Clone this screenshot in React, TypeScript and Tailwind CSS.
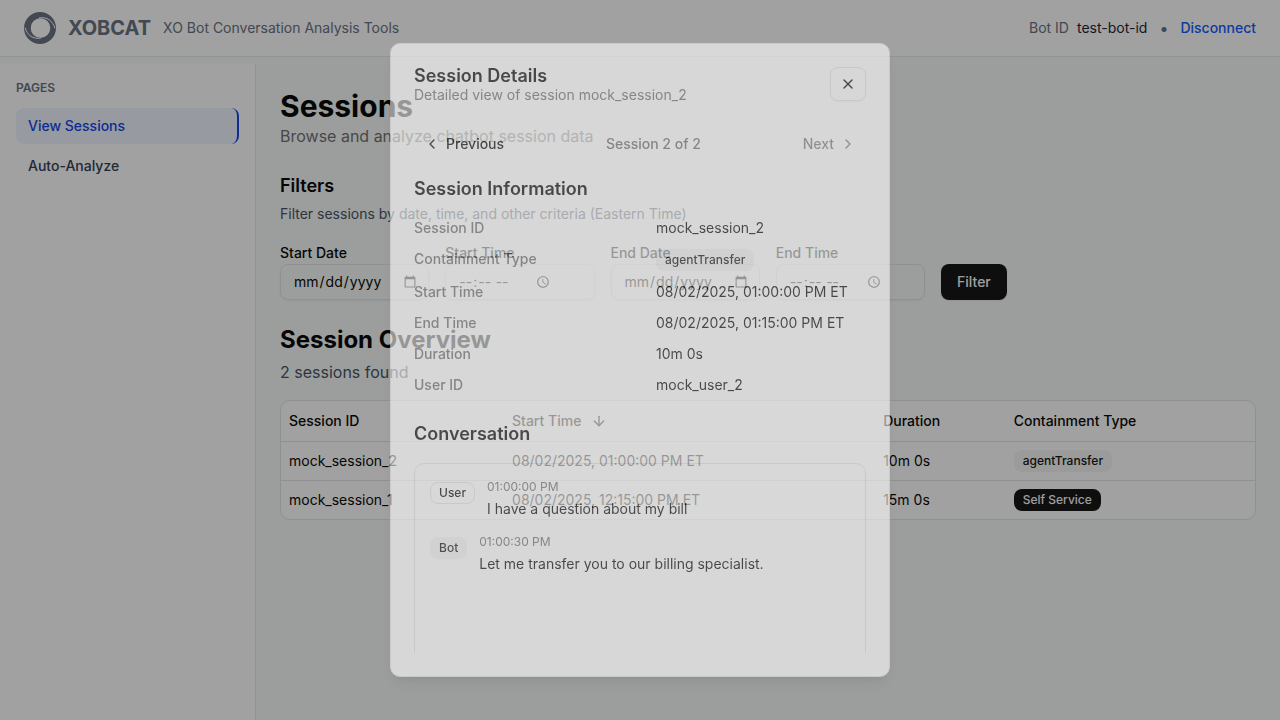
import type { ReactNode } from "react";
import { ArrowDown, ChevronLeft, ChevronRight, X } from "lucide-react";

function Logo() {
  return (
    <svg viewBox="0 0 32 32" className="size-8 text-gray-500" aria-hidden="true">
      <path
        fill="currentColor"
        fillRule="evenodd"
        d="M16 0a16 16 0 1 1 0 32a16 16 0 1 1 0-32zM16.500 6.200a9.800 9.800 0 1 0 0 19.600a9.800 9.800 0 1 0 0-19.600z"
      />
      <path
        fill="none"
        stroke="white"
        strokeLinecap="round"
        d="M15 6C23 4.200 29 9 30.800 16M17 26C9 27.800 3 23 1.200 16"
      />
    </svg>
  );
}

function Badge({ kind, children }: { kind: "solid" | "soft" | "outline"; children: ReactNode }) {
  const look = {
    solid: "border-transparent bg-neutral-900 text-neutral-50",
    soft: "border-transparent bg-neutral-100 text-neutral-900",
    outline: "border-neutral-200 text-neutral-950",
  }[kind];
  return (
    <span className={`inline-flex items-center rounded-lg border px-2 py-0.5 text-xs leading-4 font-medium ${look}`}>
      {children}
    </span>
  );
}

function Field({ id, label, type }: { id: string; label: string; type: "date" | "time" }) {
  return (
    <div className="flex grow flex-col gap-1">
      <label htmlFor={id} className="text-sm leading-[14px] font-medium">
        {label}
      </label>
      <input
        id={id}
        type={type}
        className="flex h-9 w-full rounded-lg border border-neutral-200 bg-transparent px-3 py-1 text-sm shadow-xs"
      />
    </div>
  );
}

const sessions = [
  { id: "mock_session_2", start: "08/02/2025, 01:00:00 PM ET", duration: "10m 0s", type: "agentTransfer", kind: "soft" as const },
  { id: "mock_session_1", start: "08/02/2025, 12:15:00 PM ET", duration: "15m 0s", type: "Self Service", kind: "solid" as const },
];

const details: [string, ReactNode][] = [
  ["Session ID", "mock_session_2"],
  ["Containment Type", <Badge kind="soft">agentTransfer</Badge>],
  ["Start Time", "08/02/2025, 01:00:00 PM ET"],
  ["End Time", "08/02/2025, 01:15:00 PM ET"],
  ["Duration", "10m 0s"],
  ["User ID", "mock_user_2"],
];

const messages = [
  { from: "User", kind: "outline" as const, time: "01:00:00 PM", text: "I have a question about my bill" },
  { from: "Bot", kind: "soft" as const, time: "01:00:30 PM", text: "Let me transfer you to our billing specialist." },
];

function Header() {
  return (
    <header className="flex h-[57px] items-center justify-between border-b border-gray-200 bg-white px-6">
      <div className="flex items-center gap-3">
        <Logo />
        <span className="text-xl font-bold text-gray-500">XOBCAT</span>
        <span className="text-sm text-gray-500">XO Bot Conversation Analysis Tools</span>
      </div>
      <div className="flex items-center text-sm">
        <span className="text-gray-500">Bot ID</span>
        <span className="ml-2 text-gray-800">test-bot-id</span>
        <span className="mx-3 text-base text-gray-500">•</span>
        <a href="#disconnect" className="font-medium text-blue-600">
          Disconnect
        </a>
      </div>
    </header>
  );
}

function Sidebar() {
  return (
    <aside className="w-64 shrink-0 border-r border-gray-200 bg-white p-4">
      <h2 className="mb-3 text-xs leading-4 font-semibold text-gray-500">PAGES</h2>
      <nav className="flex flex-col gap-1 text-sm font-medium">
        <a href="#sessions" className="rounded-lg border-r-2 border-blue-700 bg-blue-50 px-3 py-2 text-blue-700">
          View Sessions
        </a>
        <a href="#analyze" className="rounded-lg px-3 py-2 text-gray-700">
          Auto-Analyze
        </a>
      </nav>
    </aside>
  );
}

function SessionsPage() {
  return (
    <main className="min-w-0 grow p-6">
      <h1 className="text-3xl leading-9 font-bold">Sessions</h1>
      <p className="text-base leading-6 text-neutral-500">Browse and analyze chatbot session data</p>

      <section className="mt-6">
        <h2 className="text-lg leading-7 font-semibold">Filters</h2>
        <p className="mt-1 text-sm text-gray-600">Filter sessions by date, time, and other criteria (Eastern Time)</p>
        <form className="mt-[22px] flex items-end gap-4">
          <div className="grid w-[645px] grid-cols-4 gap-4">
            <Field id="start-date" label="Start Date" type="date" />
            <Field id="start-time" label="Start Time" type="time" />
            <Field id="end-date" label="End Date" type="date" />
            <Field id="end-time" label="End Time" type="time" />
          </div>
          <button type="button" className="h-9 rounded-lg bg-neutral-900 px-4 text-sm font-medium text-neutral-50 shadow-xs">
            Filter
          </button>
        </form>
      </section>

      <section className="mt-6">
        <h2 className="text-2xl leading-8 font-bold">Session Overview</h2>
        <p className="mt-1 text-base leading-6 text-gray-600">2 sessions found</p>
        <div className="mt-4 overflow-hidden rounded-[10px] border border-neutral-200 bg-white">
          <table className="w-full table-fixed text-left text-sm">
            <colgroup>
              <col className="w-[22.9%]" />
              <col className="w-[38.1%]" />
              <col className="w-[13.4%]" />
              <col />
            </colgroup>
            <thead>
              <tr className="h-10 border-b border-neutral-200">
                <th className="px-2 font-medium">Session ID</th>
                <th className="px-2 font-medium">
                  <span className="flex items-center gap-2">
                    Start Time
                    <ArrowDown className="ml-0.5 size-4" />
                  </span>
                </th>
                <th className="px-2 font-medium">Duration</th>
                <th className="px-2 font-medium">Containment Type</th>
              </tr>
            </thead>
            <tbody>
              {sessions.map((s) => (
                <tr key={s.id} className="border-b border-neutral-200 last:border-0">
                  <td className="px-2">{s.id}</td>
                  <td className="px-2">{s.start}</td>
                  <td className="px-2">{s.duration}</td>
                  <td className="p-2">
                    <div className="flex">
                      <Badge kind={s.kind}>{s.type}</Badge>
                    </div>
                  </td>
                </tr>
              ))}
            </tbody>
          </table>
        </div>
      </section>
    </main>
  );
}

function SessionDialog() {
  return (
    <div className="fixed inset-0 flex items-center justify-center">
      <div
        role="dialog"
        aria-labelledby="dialog-title"
        className="flex h-[88vh] w-full max-w-[500px] flex-col rounded-[10px] border border-neutral-200 bg-white px-[23px] py-[23px] opacity-58 shadow-lg"
      >
        <div className="flex items-start justify-between">
          <div>
            <h2 id="dialog-title" className="text-lg leading-[18px] font-semibold">
              Session Details
            </h2>
            <p className="text-sm text-neutral-500">Detailed view of session mock_session_2</p>
          </div>
          <button
            type="button"
            aria-label="Close"
            className="flex h-[34px] w-9 items-center justify-center rounded-lg border border-neutral-200 shadow-xs"
          >
            <X className="size-4" />
          </button>
        </div>

        <div className="mt-[27px] flex h-8 items-center justify-between text-sm font-medium">
          <button type="button" className="flex items-center gap-1.5 px-2.5">
            <ChevronLeft className="size-4" />
            Previous
          </button>
          <span className="text-neutral-500">Session 2 of 2</span>
          <button type="button" disabled className="flex items-center gap-1.5 px-2.5 opacity-50">
            Next
            <ChevronRight className="size-4" />
          </button>
        </div>

        <div className="min-h-0 grow overflow-hidden pt-[22px]">
          <h3 className="text-lg leading-6 font-semibold">Session Information</h3>
          <dl className="mt-[17px] flex flex-col gap-[11px] text-sm">
            {details.map(([label, value]) => (
              <div key={label} className="grid grid-cols-2 gap-8">
                <dt className="font-medium text-neutral-500">{label}</dt>
                <dd className="flex">{value}</dd>
              </div>
            ))}
          </dl>

          <h3 className="mt-[27px] text-lg leading-6 font-semibold">Conversation</h3>
          <div className="mt-[17px] flex h-96 flex-col gap-[15px] rounded-[10px] border border-neutral-200 p-[15px]">
            {messages.map((m) => (
              <div key={m.time} className="flex items-start gap-3">
                <div className="mt-[3px] flex">
                  <Badge kind={m.kind}>{m.from}</Badge>
                </div>
                <div>
                  <p className="text-xs leading-4 text-neutral-500">{m.time}</p>
                  <p className="mt-1 text-sm leading-5">{m.text}</p>
                </div>
              </div>
            ))}
          </div>
        </div>
      </div>
    </div>
  );
}

export default function App() {
  return (
    <div className="flex min-h-screen flex-col bg-[#f6faf8] font-['Inter',sans-serif] text-neutral-950">
      <Header />
      <div className="flex grow pt-[7px]">
        <Sidebar />
        <SessionsPage />
      </div>
      <div className="fixed inset-0 bg-black/37" />
      <SessionDialog />
    </div>
  );
}
